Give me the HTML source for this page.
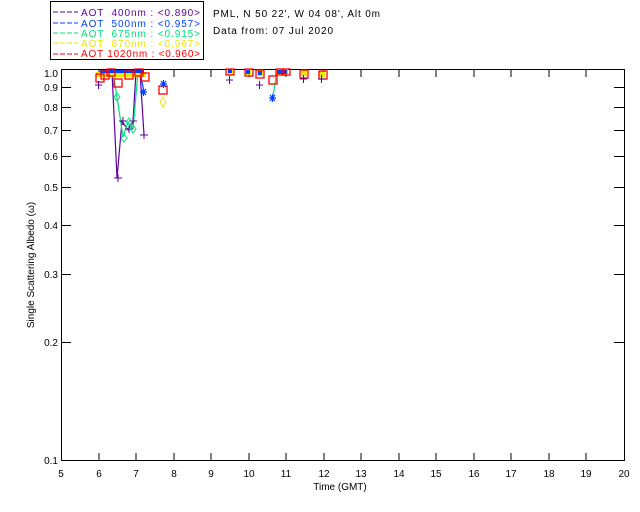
<!DOCTYPE html>
<html><head><style>
html,body{margin:0;padding:0;background:#fff;}
svg{display:block;}
text{font-family:"Liberation Sans",sans-serif;font-size:10px;}
</style></head><body>
<svg width="640" height="512" viewBox="0 0 640 512" xmlns="http://www.w3.org/2000/svg">
<rect width="640" height="512" fill="#fff"/>
<!-- legend -->
<rect x="50.5" y="1.5" width="153" height="58" fill="none" stroke="#000" stroke-width="1"/>
<g stroke-width="1" stroke-dasharray="5,2">
<line x1="53" y1="12" x2="78" y2="12" stroke="#6000a0"/>
<line x1="53" y1="23" x2="78" y2="23" stroke="#0040ff"/>
<line x1="53" y1="33" x2="78" y2="33" stroke="#00e080"/>
<line x1="53" y1="43" x2="78" y2="43" stroke="#e8e800"/>
<line x1="53" y1="54" x2="78" y2="54" stroke="#ff0000"/>
</g>
<text x="81" y="16" fill="#6000a0" textLength="119" lengthAdjust="spacing" xml:space="preserve">AOT  400nm : &lt;0.890&gt;</text>
<text x="81" y="27" fill="#0040ff" textLength="119" lengthAdjust="spacing" xml:space="preserve">AOT  500nm : &lt;0.957&gt;</text>
<text x="81" y="37" fill="#00e080" textLength="119" lengthAdjust="spacing" xml:space="preserve">AOT  675nm : &lt;0.915&gt;</text>
<text x="81" y="47" fill="#e8e800" textLength="119" lengthAdjust="spacing" xml:space="preserve">AOT  870nm : &lt;0.967&gt;</text>
<text x="81" y="57" fill="#ff0000" textLength="119" lengthAdjust="spacing" xml:space="preserve">AOT 1020nm : &lt;0.960&gt;</text>
<text x="213" y="17" fill="#000" textLength="167" lengthAdjust="spacing">PML, N 50 22', W 04 08', Alt 0m</text>
<text x="213" y="34" fill="#000" textLength="120" lengthAdjust="spacing">Data from: 07 Jul 2020</text>
<!-- axes -->
<rect x="61.5" y="69.5" width="563" height="391" fill="none" stroke="#000" stroke-width="1"/>
<g stroke="#000" stroke-width="1">
<path d="M99 461v-8M136 461v-8M174 461v-8M211 461v-8M249 461v-8M286 461v-8M324 461v-8M361 461v-8M399 461v-8M436 461v-8M474 461v-8M511 461v-8M549 461v-8M586 461v-8"/>
<path d="M99 69v8M136 69v8M174 69v8M211 69v8M249 69v8M286 69v8M324 69v8M361 69v8M399 69v8M436 69v8M474 69v8M511 69v8M549 69v8M586 69v8"/>
<path d="M61 87.5h10M61 107.5h10M61 130.5h10M61 156.5h10M61 187.5h10M61 225.5h10M61 274.5h10M61 342.5h10"/>
<path d="M624 87.5h-10M624 107.5h-10M624 130.5h-10M624 156.5h-10M624 187.5h-10M624 225.5h-10M624 274.5h-10M624 342.5h-10"/>
</g>
<g fill="#000" text-anchor="end">
<text x="58" y="77">1.0</text><text x="58" y="91">0.9</text><text x="58" y="111">0.8</text>
<text x="58" y="134">0.7</text><text x="58" y="160">0.6</text><text x="58" y="191">0.5</text>
<text x="58" y="229">0.4</text><text x="58" y="278">0.3</text><text x="58" y="346">0.2</text>
<text x="58" y="464">0.1</text>
</g>
<g fill="#000" text-anchor="middle">
<text x="61" y="477">5</text><text x="99" y="477">6</text><text x="136" y="477">7</text><text x="174" y="477">8</text>
<text x="211" y="477">9</text><text x="249" y="477">10</text><text x="286" y="477">11</text><text x="324" y="477">12</text>
<text x="361" y="477">13</text><text x="399" y="477">14</text><text x="436" y="477">15</text><text x="474" y="477">16</text>
<text x="511" y="477">17</text><text x="549" y="477">18</text><text x="586" y="477">19</text><text x="624" y="477">20</text>
<text x="340" y="490">Time (GMT)</text>
<text transform="translate(34,265) rotate(-90)">Single Scattering Albedo (ω)</text>
</g>
<!-- data lines -->
<g fill="none" stroke-width="1.2">
<polyline stroke="#6000a0" points="112,72 117,178 122,121 128,130 133,121 136,72"/>
<polyline stroke="#6000a0" points="140,72 144,135"/>
<polyline stroke="#00e080" points="113,72 117,97 123,137 128,122 133,129 138,72"/>
<polyline stroke="#0040ff" points="140,72 144,92"/>
<polyline stroke="#00e080" points="273,96 277,72"/>
</g>
<g fill="#e8e800">
<rect x="96" y="72" width="50" height="5"/>
<rect x="227" y="69" width="6" height="6"/><rect x="245" y="69" width="6" height="6"/>
<rect x="257" y="70" width="6" height="6"/><rect x="276" y="69" width="12" height="6"/>
<rect x="301" y="70" width="6" height="6"/><rect x="319" y="71" width="6" height="6"/>
</g>
<g fill="#0040ff">
<rect x="100" y="70" width="44" height="3"/>
<rect x="228" y="69" width="4" height="4"/><rect x="246" y="70" width="4" height="4"/>
<rect x="258" y="71" width="4" height="4"/><rect x="277" y="70" width="10" height="4"/>
</g>
<g fill="none" stroke="#ff0000" stroke-width="1.3">
<rect x="96" y="74" width="8" height="8"/><rect x="101" y="71" width="8" height="8"/>
<rect x="107" y="69" width="8" height="7"/><rect x="114" y="79" width="8" height="8"/>
<rect x="125" y="71" width="8" height="8"/><rect x="135" y="69" width="8" height="7"/>
<rect x="141" y="73" width="8" height="8"/><rect x="159" y="86" width="8" height="8"/>
<rect x="226" y="69" width="8" height="6"/><rect x="245" y="69" width="8" height="7"/>
<rect x="256" y="70" width="8" height="8"/><rect x="269" y="76" width="8" height="8"/>
<rect x="276" y="69" width="8" height="6"/><rect x="282" y="69" width="8" height="6"/>
<rect x="300" y="70" width="8" height="8"/><rect x="319" y="71" width="8" height="8"/>
</g>
<g stroke="#6000a0" stroke-width="1" fill="none">
<path d="M95 85h7M98.5 81v8M114 178h8M118 174v8M119 121h8M123 117v8M125 129h8M129 125v8M129 121h8M133 117v8M140 135h8M144 131v8M226 80h7M229.5 76v8M256 85h7M259.5 81v8M300 79h7M303.5 75v8M318 79h7M321.5 75v8"/>
</g>
<g stroke="#0040ff" stroke-width="1.2" fill="none">
<path d="M140 92h7M143.5 88v8M141 89l5 6M146 89l-5 6M160 84h7M163.5 80v8M161 81l5 6M166 81l-5 6M269 98h7M272.5 94v8M270 95l5 6M275 95l-5 6"/>
</g>
<g stroke="#00e080" stroke-width="1" fill="none">
<path d="M117 93l3 4-3 4-3-4zM124 134l3 4-3 4-3-4zM129 118l3 4-3 4-3-4zM133 125l3 4-3 4-3-4z"/>
</g>
<path d="M163 97l3 5-3 5-3-5z" stroke="#e8e800" fill="none"/>
</svg>
</body></html>
